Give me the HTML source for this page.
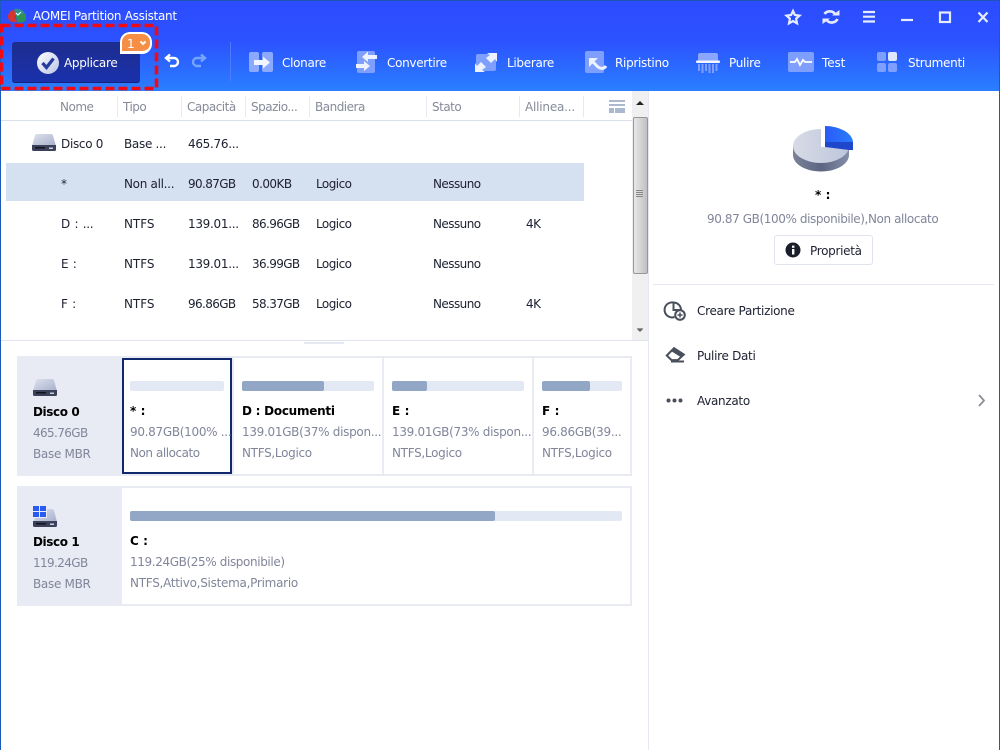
<!DOCTYPE html>
<html><head><meta charset="utf-8"><style>
html,body{margin:0;padding:0}
body{width:1000px;height:750px;overflow:hidden;background:#fff;position:relative;font-family:"DejaVu Sans",sans-serif;font-size:12px;letter-spacing:-.3px}
.t{position:absolute;white-space:nowrap;line-height:16px;color:#1d2030}
.s{letter-spacing:-.55px}
.n{letter-spacing:-.62px}
.x{letter-spacing:-.05px}
.ws{word-spacing:1px}
.g{color:#81859a}
.h{color:#868b99;letter-spacing:-.5px}
.w{color:#fff}
.b{font-weight:bold;color:#000;letter-spacing:-.4px}
.a{position:absolute}
svg{position:absolute;overflow:visible}
.sep{position:absolute;top:96px;height:21px;width:1px;background:#e6e9f1}
.bar{position:absolute;height:10px;background:#e3e9f4;border-radius:2px}
.fill{position:absolute;left:0;top:0;height:10px;background:#92a7c6;border-radius:2px}
</style></head><body>
<div class="a" style="left:0;top:0;width:1000px;height:91px;background:linear-gradient(#2c4cff 0,#2c52ff 45%,#2a7fff 100%)"></div>
<div class="a" style="left:0;top:0;width:1000px;height:1px;background:#1b56b4"></div>
<div class="a" style="left:0;top:0;width:1px;height:750px;background:#1b5ab8"></div>
<div class="a" style="left:999px;top:0;width:1px;height:750px;background:#1b5ab8"></div>

<svg style="left:0;top:0" width="30" height="26"><path d="M8 17c0-4 3-7 7-7v7l2 5c-5 1-9-1-9-5z" fill="#d8342f"/><path d="M14 9c5-1 10 1 11 5l-9 3z" fill="#2f8f8a"/><path d="M16 15l10-1v6c-3 3-7 3-9 2z" fill="#2f9450"/><path d="M16 13l2 2 3-3" stroke="#dff" stroke-width="1.200" fill="none"/></svg>
<div class="t w" style="left:33px;top:8px">AOMEI Partition Assistant</div>

<svg style="left:780px;top:4px" width="215" height="26" fill="none" stroke="#e6ecff" stroke-width="2.200">
<path d="M13 7l1.900 4 4.600.6-3.400 3.100.9 4.600-4-2.300-4 2.300.9-4.600-3.400-3.100 4.600-.6z"/>
<path d="M44.500 10a6.500 6.500 0 0 1 10.500 0M57.500 15a6.500 6.500 0 0 1-10.500 1.500" stroke-width="2.600"/><path d="M52 11.500h7.500V6zM50 14.500h-7.500V20z" fill="#e6ecff" stroke="none"/>
<path d="M83 8h12M83 12.700h12M83 17.500h12" stroke-width="2.200"/>
<path d="M121 16h12" stroke-width="2.200"/>
<rect x="160" y="8.500" width="10" height="9.500" stroke-width="2.200"/>
<path d="M198.500 8.500l9 9.500M207.500 8.500l-9 9.500" stroke-width="2.200"/>
</svg>

<div class="a" style="left:12px;top:42px;width:128px;height:41px;border-radius:3px;background:linear-gradient(#1d2d8d,#1a31ad);box-shadow:inset 0 -1px 0 #16237a"></div>
<svg style="left:36px;top:51px" width="24" height="24"><defs><linearGradient id="c1" x1="0" y1="0" x2="1" y2="1"><stop offset="0" stop-color="#fff"/><stop offset="1" stop-color="#b9c3e6"/></linearGradient></defs><circle cx="12" cy="12" r="11" fill="url(#c1)"/><path d="M6.500 12l4 4.500 7-9" fill="none" stroke="#243a9e" stroke-width="3.200"/></svg>
<div class="t w" style="left:64px;top:55px">Applicare</div>
<div class="a" style="left:120px;top:32px;width:28px;height:17px;background:#f58f45;border:2px solid #fff;border-radius:10px 10px 10px 0;border-bottom-width:3px"></div>
<div class="t w" style="left:127px;top:36px">1</div>
<svg style="left:139px;top:40px" width="10" height="8"><path d="M1.500 1.500l2.500 2.500 2.500-2.500" fill="none" stroke="#fff" stroke-width="2"/></svg>

<svg style="left:0;top:0" width="160" height="92"><rect x="1.500" y="25.500" width="155" height="63" fill="none" stroke="#f00b14" stroke-width="3.600" stroke-dasharray="9 4"/></svg>

<svg style="left:163px;top:52px" width="45" height="20" fill="none" stroke-width="2.400">
<path d="M4 6h7a4 4 0 0 1 0 8H7" stroke="#fff"/><path d="M7 2.500L3 6l4 3.500" stroke="#fff"/>
<path d="M41 6h-7a4 4 0 0 0 0 8h4" stroke="#76a4ff"/><path d="M38 2.500L42 6l-4 3.500" stroke="#76a4ff"/>
</svg>
<div class="a" style="left:230px;top:42px;width:1px;height:39px;background:#4f7cff"></div>

<svg style="left:0;top:45px" width="1000" height="35">
<rect x="249" y="7" width="10" height="20" rx="2" fill="#8aa9ff"/><rect x="262" y="7" width="11" height="20" rx="2" fill="#8aa9ff"/><path d="M254 15h9v-3.500l7 6-7 6V20h-9z" fill="#f2f5ff"/>
<rect x="357" y="6" width="18" height="22" rx="2" fill="#7f9fff"/><path d="M377 10h-9V6.500l-6 5.500 6 5v-3h9zM356 19h8v-3l6 5-6 5v-3h-8z" fill="#eef2ff"/>
<rect x="476" y="9" width="20" height="17" rx="2" fill="#7f9fff"/><path d="M486 13l4-3-3-2h10v9l-2-3-4 4zM486 22l-4 3 3 2h-10v-9l2 3 4-4z" fill="#eef2ff"/>
<rect x="585" y="6" width="19" height="22" rx="2" fill="#7f9fff"/><path d="M592 16l6 6c3 2 6 2 8-1" stroke="#eef2ff" stroke-width="3" fill="none"/><path d="M589 13h9l-9 9z" fill="#eef2ff"/>
<path d="M698 17v-7a2 2 0 0 1 2-2h16a2 2 0 0 1 2 2v7z" fill="#8aa6ff"/><rect x="696" y="15.500" width="24" height="2.500" rx="1" fill="#f4f7ff"/>
<path d="M699 19v7M702.500 19v9M706 19v7M709.500 19v9M713 19v9M716.500 19v7" stroke="#7f9fff" stroke-width="2"/>
<rect x="788" y="7" width="26" height="20" rx="2" fill="#7f9fff"/><path d="M790 17h5l2-3 3 6 3-5 2 2h7" fill="none" stroke="#fff" stroke-width="1.800"/>
<rect x="877" y="7" width="9" height="9" rx="2" fill="#7f9fff"/><rect x="888" y="7" width="9" height="9" rx="2" fill="#dfe7ff"/><rect x="877" y="18" width="9" height="9" rx="2" fill="#7f9fff"/><rect x="888" y="18" width="9" height="9" rx="2" fill="#7f9fff"/>
</svg>
<div class="t w" style="left:282px;top:55px">Clonare</div>
<div class="t w" style="left:387px;top:55px">Convertire</div>
<div class="t w" style="left:507px;top:55px">Liberare</div>
<div class="t w" style="left:615px;top:55px">Ripristino</div>
<div class="t w" style="left:729px;top:55px">Pulire</div>
<div class="t w" style="left:822px;top:55px;letter-spacing:-.1px">Test</div>
<div class="t w" style="left:908px;top:55px">Strumenti</div>

<div class="t h" style="left:60px;top:99px">Nome</div><div class="sep" style="left:117px"></div>
<div class="t h" style="left:123px;top:99px">Tipo</div><div class="sep" style="left:181px"></div>
<div class="t h" style="left:187px;top:99px">Capacità</div><div class="sep" style="left:245px"></div>
<div class="t h" style="left:251px;top:99px">Spazio...</div><div class="sep" style="left:309px"></div>
<div class="t h" style="left:315px;top:99px">Bandiera</div><div class="sep" style="left:426px"></div>
<div class="t h" style="left:432px;top:99px">Stato</div><div class="sep" style="left:519px"></div>
<div class="t h" style="left:525px;top:99px;letter-spacing:-.2px">Allinea...</div><div class="sep" style="left:583px"></div>
<svg style="left:609px;top:100px" width="16" height="13"><rect width="16" height="2" fill="#aab9cf"/><rect y="4" width="16" height="2" fill="#aab9cf"/><rect y="8" width="5" height="5" fill="#aab9cf"/><rect x="6" y="8" width="10" height="5" fill="#aab9cf"/></svg>
<div class="a" style="left:1px;top:120px;width:631px;height:1px;background:#dbe1ec"></div>

<div class="a" style="left:632px;top:91px;width:16px;height:249px;background:#f0f0f0"></div>
<svg style="left:632px;top:91px" width="16" height="249"><path d="M4 14l4-4 4 4z" fill="#222"/><path d="M5 238h6l-3 3z" fill="#666"/><path d="M5 237.500h6" stroke="#999"/></svg>
<div class="a" style="left:633px;top:117px;width:13px;height:155px;background:linear-gradient(90deg,#e8e8e8,#d8d8d8 40%,#c0c0c0);border:1px solid #979797;border-radius:2px"></div>
<svg style="left:636px;top:190px" width="10" height="10"><path d="M0 .5h7M0 2.500h7M0 4.500h7M0 6.500h7" stroke="#888" stroke-width="1"/></svg>
<div class="a" style="left:648px;top:91px;width:1px;height:659px;background:#e4e8f0"></div>

<div class="a" style="left:6px;top:163px;width:578px;height:38px;background:#d5e0f0"></div>
<svg style="left:32px;top:134px" width="24" height="18"><defs><linearGradient id="d1" x1="0" y1="0" x2="1" y2="1"><stop offset="0" stop-color="#dfe3ee"/><stop offset="1" stop-color="#a6aecb"/></linearGradient></defs><path d="M3 1.500Q3.300 0 5 0h14q1.700 0 2 1.500L24 12H0z" fill="url(#d1)"/><path d="M0 11h24v4.500q0 1.500-1.500 1.500h-21Q0 17 0 15.500z" fill="#3a4159"/><rect x="3" y="13" width="10" height="1.500" fill="#11141e"/><rect x="17" y="13.500" width="4" height="1.500" fill="#c9d0e4"/></svg>

<div class="t" style="left:61px;top:136px">Disco 0</div><div class="t" style="left:124px;top:136px">Base ...</div><div class="t n" style="left:188px;top:136px;letter-spacing:-.3px">465.76...</div>
<div class="t" style="left:61px;top:176px">*</div><div class="t" style="left:124px;top:176px">Non all...</div><div class="t n" style="left:188px;top:176px">90.87GB</div><div class="t s" style="left:252px;top:176px">0.00KB</div><div class="t s" style="left:316px;top:176px">Logico</div><div class="t s" style="left:433px;top:176px">Nessuno</div>
<div class="t ws" style="left:61px;top:216px">D : ...</div><div class="t x" style="left:124px;top:216px">NTFS</div><div class="t" style="left:188px;top:216px">139.01...</div><div class="t n" style="left:252px;top:216px">86.96GB</div><div class="t s" style="left:316px;top:216px">Logico</div><div class="t s" style="left:433px;top:216px">Nessuno</div><div class="t s" style="left:526px;top:216px">4K</div>
<div class="t ws" style="left:61px;top:256px">E :</div><div class="t x" style="left:124px;top:256px">NTFS</div><div class="t" style="left:188px;top:256px">139.01...</div><div class="t n" style="left:252px;top:256px">36.99GB</div><div class="t s" style="left:316px;top:256px">Logico</div><div class="t s" style="left:433px;top:256px">Nessuno</div>
<div class="t ws" style="left:61px;top:296px">F :</div><div class="t x" style="left:124px;top:296px">NTFS</div><div class="t n" style="left:188px;top:296px">96.86GB</div><div class="t n" style="left:252px;top:296px">58.37GB</div><div class="t s" style="left:316px;top:296px">Logico</div><div class="t s" style="left:433px;top:296px">Nessuno</div><div class="t s" style="left:526px;top:296px">4K</div>

<div class="a" style="left:1px;top:340px;width:647px;height:1px;background:#e1e5ee"></div>
<div class="a" style="left:304px;top:342px;width:40px;height:2px;background:#e4e9f3"></div>

<div class="a" style="left:17px;top:356px;width:615px;height:120px;box-sizing:border-box;border:2px solid #e8ebf2"></div>
<div class="a" style="left:17px;top:356px;width:105px;height:120px;background:#e8ebf3"></div>
<div class="a" style="left:382px;top:356px;width:2px;height:120px;background:#e8ebf2"></div>
<div class="a" style="left:532px;top:356px;width:2px;height:120px;background:#e8ebf2"></div>
<div class="a" style="left:122px;top:358px;width:110px;height:116px;box-sizing:border-box;border:2px solid #12286e;background:#fff"></div>
<div class="a" style="left:232px;top:356px;width:2px;height:120px;background:#e8ebf2"></div>
<svg style="left:33px;top:379px" width="24" height="18"><path d="M3 1.500Q3.300 0 5 0h14q1.700 0 2 1.500L24 12H0z" fill="url(#d1)"/><path d="M0 11h24v4.500q0 1.500-1.500 1.500h-21Q0 17 0 15.500z" fill="#3a4159"/><rect x="3" y="13" width="10" height="1.500" fill="#11141e"/><rect x="17" y="13.500" width="4" height="1.500" fill="#c9d0e4"/></svg>
<div class="t b" style="left:33px;top:404px">Disco 0</div>
<div class="t g n" style="left:33px;top:425px">465.76GB</div>
<div class="t g" style="left:33px;top:446px">Base MBR</div>

<div class="bar" style="left:130px;top:381px;width:94px"></div>
<div class="t b ws" style="left:130px;top:403px">* :</div>
<div class="t g" style="left:130px;top:424px">90.87GB(100% ...</div>
<div class="t g" style="left:130px;top:445px;letter-spacing:-.45px">Non allocato</div>

<div class="bar" style="left:242px;top:381px;width:132px"><div class="fill" style="width:82px"></div></div>
<div class="t b" style="left:242px;top:403px;letter-spacing:-.25px">D : Documenti</div>
<div class="t g" style="left:242px;top:424px">139.01GB(37% dispon...</div>
<div class="t g" style="left:242px;top:445px">NTFS,Logico</div>

<div class="bar" style="left:392px;top:381px;width:132px"><div class="fill" style="width:35px"></div></div>
<div class="t b ws" style="left:392px;top:403px">E :</div>
<div class="t g" style="left:392px;top:424px">139.01GB(73% dispon...</div>
<div class="t g" style="left:392px;top:445px">NTFS,Logico</div>

<div class="bar" style="left:542px;top:381px;width:80px"><div class="fill" style="width:48px"></div></div>
<div class="t b ws" style="left:542px;top:403px">F :</div>
<div class="t g" style="left:542px;top:424px">96.86GB(39...</div>
<div class="t g" style="left:542px;top:445px">NTFS,Logico</div>

<div class="a" style="left:17px;top:486px;width:615px;height:120px;box-sizing:border-box;border:2px solid #e8ebf2"></div>
<div class="a" style="left:17px;top:486px;width:105px;height:120px;background:#e8ebf3"></div>
<svg style="left:33px;top:506px" width="24" height="22"><path d="M14 3h5q1.700 0 2 1.500L24 16H0l2-4h12z" fill="url(#d1)"/><path d="M0 15h24v4.500q0 1.500-1.500 1.500h-21Q0 21 0 19.500z" fill="#3a4159"/><rect x="3" y="17" width="10" height="1.500" fill="#11141e"/><rect x="17" y="17.500" width="4" height="1.500" fill="#c9d0e4"/><rect width="6" height="5" fill="#2a5bf0"/><rect x="7" width="6" height="5" fill="#2a5bf0"/><rect y="6" width="6" height="5" fill="#2a5bf0"/><rect x="7" y="6" width="6" height="5" fill="#2a5bf0"/></svg>
<div class="t b" style="left:33px;top:534px">Disco 1</div>
<div class="t g n" style="left:33px;top:555px">119.24GB</div>
<div class="t g" style="left:33px;top:576px">Base MBR</div>
<div class="bar" style="left:130px;top:511px;width:492px"><div class="fill" style="width:365px"></div></div>
<div class="t b ws" style="left:130px;top:533px">C :</div>
<div class="t g" style="left:130px;top:554px;letter-spacing:-.38px">119.24GB(25% disponibile)</div>
<div class="t g" style="left:130px;top:575px;letter-spacing:-.27px">NTFS,Attivo,Sistema,Primario</div>

<svg style="left:785px;top:120px" width="75" height="60"><defs><linearGradient id="p1" x1="0" x2="1"><stop offset="0" stop-color="#d7dbe6"/><stop offset="1" stop-color="#bdc6db"/></linearGradient><linearGradient id="p2" x1="0" x2="1"><stop offset="0" stop-color="#7a8299"/><stop offset=".5" stop-color="#5c6681"/><stop offset="1" stop-color="#858ea8"/></linearGradient><linearGradient id="p3" x1="0" x2="1"><stop offset="0" stop-color="#2a5af8"/><stop offset="1" stop-color="#2a7dfa"/></linearGradient></defs>
<path d="M8 26v9c0 9 12.500 16.500 28 16.500s28-7.500 28-16.500v-9z" fill="url(#p2)"/><ellipse cx="36" cy="26" rx="28" ry="17" fill="url(#p1)"/><rect x="36" y="5" width="32" height="22" fill="#fff"/>
<path d="M40 6a28 17 0 0 1 28 16H40z" fill="url(#p3)"/><path d="M40 22h28v8H64l-24-3z" fill="#1f47cc"/></svg>
<div class="t b ws" style="left:815px;top:187px">* :</div>
<div class="t g" style="left:707px;top:211px;letter-spacing:-.4px">90.87 GB(100% disponibile),Non allocato</div>
<div class="a" style="left:774px;top:235px;width:99px;height:30px;box-sizing:border-box;border:1px solid #dfe3ec;border-radius:3px"></div>
<svg style="left:785px;top:242px" width="16" height="16"><circle cx="8" cy="8" r="7.500" fill="#1c1f2b"/><rect x="7" y="7" width="2.400" height="5.500" fill="#fff"/><rect x="7" y="3.600" width="2.400" height="2.200" fill="#fff"/></svg>
<div class="t" style="left:810px;top:243px">Proprietà</div>
<div class="a" style="left:653px;top:284px;width:341px;height:1px;background:#e4e8f2"></div>

<svg style="left:660px;top:298px" width="30" height="115" fill="none" stroke="#4a4f5c" stroke-width="2">
<path d="M15 5a7.500 7.500 0 1 0-.5 14M13.500 4.500v7.500h7.500a7.500 7.500 0 0 0-7.500-7.500z"/><circle cx="20" cy="17" r="4.800" fill="#fff"/><path d="M17.500 17h5M20 14.500v5" stroke-width="1.500"/>
<path d="M6.800 57.500L14 50.200l9.800 6.300-6 5.600H11.500z"/><path d="M14 50l10 6.500-3 2.700-10-6.200z" fill="#4a4f5c" stroke="none"/><path d="M11 63.500h13" stroke-width="2"/>
<circle cx="8.500" cy="102.500" r="2" fill="#4a4f5c" stroke="none"/><circle cx="14.500" cy="102.500" r="2" fill="#4a4f5c" stroke="none"/><circle cx="20.500" cy="102.500" r="2" fill="#4a4f5c" stroke="none"/></svg>
<div class="t" style="left:697px;top:303px">Creare Partizione</div>
<div class="t" style="left:697px;top:348px">Pulire Dati</div>
<div class="t" style="left:697px;top:393px">Avanzato</div>
<svg style="left:977px;top:394px" width="10" height="13"><path d="M2 1l5 5.500L2 12" fill="none" stroke="#8b8f99" stroke-width="1.800"/></svg>
</body></html>
